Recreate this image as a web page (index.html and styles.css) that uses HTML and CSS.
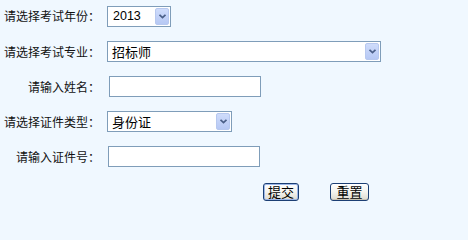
FILE: index.html
```html
<!DOCTYPE html>
<html lang="zh-CN">
<head>
<meta charset="utf-8">
<title>考试查询</title>
<link rel="stylesheet" href="styles.css">
</head>
<body>
<form class="query-form">
  <label class="label" for="year">请选择考试年份：</label>
  <span class="select select-year">
    <select id="year" class="select-field num"><option>2013</option></select>
    <span class="select-arrow"><svg width="7" height="5" viewBox="0 0 7 5"><path d="M0.5 0.8 L3.5 3.6 L6.5 0.8" fill="none" stroke="#4a5f88" stroke-width="1.8"/></svg></span>
  </span>

  <label class="label" for="major">请选择考试专业：</label>
  <span class="select select-major">
    <select id="major" class="select-field"><option>招标师</option></select>
    <span class="select-arrow"><svg width="7" height="5" viewBox="0 0 7 5"><path d="M0.5 0.8 L3.5 3.6 L6.5 0.8" fill="none" stroke="#4a5f88" stroke-width="1.8"/></svg></span>
  </span>

  <label class="label" for="name">请输入姓名：</label>
  <input id="name" class="text-input input-name" type="text">

  <label class="label" for="idtype">请选择证件类型：</label>
  <span class="select select-idtype">
    <select id="idtype" class="select-field"><option>身份证</option></select>
    <span class="select-arrow"><svg width="7" height="5" viewBox="0 0 7 5"><path d="M0.5 0.8 L3.5 3.6 L6.5 0.8" fill="none" stroke="#4a5f88" stroke-width="1.8"/></svg></span>
  </span>

  <label class="label" for="idno">请输入证件号：</label>
  <input id="idno" class="text-input" type="text">

  <span class="actions">
    <button type="button" class="btn btn-submit">提交</button>
    <button type="reset" class="btn btn-reset">重置</button>
  </span>
</form>
</body>
</html>
```

FILE: styles.css
```css
html, body {
  margin: 0;
  padding: 0;
}

body {
  background: #f0f8ff;
  font-family: "Noto Sans CJK SC", "Liberation Sans", sans-serif;
  font-size: 12px;
  color: #000;
  width: 468px;
  height: 205px;
  overflow: hidden;
}

.query-form {
  display: grid;
  grid-template-columns: 100px auto;
  grid-template-rows: 22px repeat(5, 21px);
  column-gap: 7px;
  row-gap: 14px;
  padding-top: 5px;
  align-items: center;
}

.label {
  justify-self: end;
  white-space: nowrap;
  line-height: 14px;
  font-size: 12px;
  color: #111;
}

.select {
  justify-self: start;
  display: flex;
  box-sizing: border-box;
  height: 21px;
  padding: 1px;
  border: 1px solid #7f9db9;
  background: #fff;
}

.select-year { width: 64px; }
.select-major { width: 274px; }
.select-idtype { width: 125px; }

.select-field {
  appearance: none;
  -webkit-appearance: none;
  flex: 1;
  min-width: 0;
  border: none;
  outline: none;
  background: transparent;
  margin: 0;
  padding: 0 0 0 3px;
  font-family: "Noto Sans CJK SC", "Liberation Sans", sans-serif;
  font-size: 13px;
  color: #000;
  line-height: 17px;
}

.select-field.num {
  font-family: "Liberation Sans", "Noto Sans CJK SC", sans-serif;
  font-size: 12.5px;
  padding-left: 4px;
}

.select-arrow {
  display: flex;
  align-items: center;
  justify-content: center;
  box-sizing: border-box;
  width: 14px;
  border: 1px solid #b7c8ef;
  border-radius: 2px;
  background: linear-gradient(#cfdcfb, #b6c8f4);
}

.select-arrow svg {
  display: block;
}

.text-input {
  justify-self: start;
  box-sizing: border-box;
  width: 152px;
  height: 21px;
  margin: 0 0 0 1px;
  padding: 0 3px;
  border: 1px solid #7f9db9;
  background: #fff;
  font-family: "Noto Sans CJK SC", "Liberation Sans", sans-serif;
  font-size: 12px;
  outline: none;
}

.input-name {
  margin-left: 2px;
}

.actions {
  grid-column: 2;
  display: flex;
  align-items: center;
  gap: 31px;
  padding-left: 156px;
}

.btn {
  box-sizing: border-box;
  height: 18px;
  padding: 0;
  margin: 0;
  border: 1px solid #1c3f74;
  border-radius: 3px;
  background: linear-gradient(#ffffff 0%, #f4f3ee 50%, #dedbd0 100%);
  box-shadow: inset 0 -1px 0 #c9c3b4, inset 0 1px 0 #fff;
  font-family: "Noto Sans CJK SC", "Liberation Sans", sans-serif;
  font-size: 13px;
  line-height: 16px;
  color: #000;
}

.btn-submit {
  width: 36px;
  box-shadow: inset 0 0 0 1px #9db7e8;
}

.btn-reset {
  width: 39px;
}
```
